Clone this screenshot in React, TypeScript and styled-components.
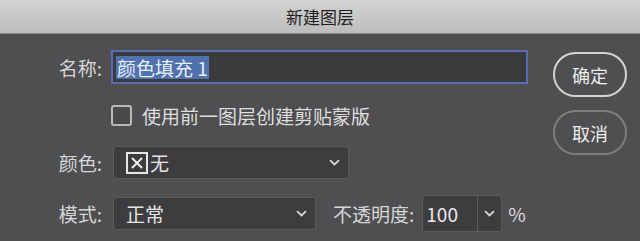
import styled, { createGlobalStyle } from 'styled-components';

const GlobalStyle = createGlobalStyle`
  html, body {
    margin: 0;
    padding: 0;
    background: #4f4f51;
  }
  body {
    font-family: "Noto Sans CJK SC", "Noto Sans", sans-serif;
  }
`;

const Dialog = styled.div`
  width: 640px;
  height: 241px;
  display: flex;
  flex-direction: column;
  background: #4f4f51;
  overflow: hidden;
`;

const TitleBar = styled.div`
  height: 33px;
  flex-shrink: 0;
  display: flex;
  align-items: center;
  justify-content: center;
  background: linear-gradient(#d2d2d2, #bdbdbd);
  border-bottom: 1px solid #8a8a8a;
  color: #1e1e1e;
  font-size: 17px;
  line-height: 1;
`;

const Body = styled.div`
  flex: 1;
  display: flex;
  padding: 16px 0 0 0;
`;

const Form = styled.div`
  display: flex;
  flex-direction: column;
  width: 540px;
`;

const Row = styled.div<{ $top?: number }>`
  display: flex;
  align-items: center;
  margin-top: ${(p) => p.$top ?? 0}px;
`;

const Label = styled.label`
  width: 108px;
  padding-right: 6px;
  box-sizing: border-box;
  text-align: right;
  color: #d6d6d6;
  font-size: 19px;
  line-height: 1;
  flex-shrink: 0;
`;

const NameInput = styled.div`
  width: 407px;
  height: 30px;
  display: flex;
  align-items: center;
  margin-left: 3px;
  padding: 0 3px;
  background: #3b3b3d;
  border: 2px solid #5a6db0;
  box-sizing: content-box;
`;

const Selected = styled.span`
  background: #4f72ad;
  color: #e8eefa;
  font-size: 19px;
  line-height: 23px;
  padding: 0 1px;
`;

const CheckRow = styled.div`
  display: flex;
  align-items: center;
  margin-left: 111px;
  margin-top: 21px;
  gap: 10px;
  color: #dedede;
  font-size: 19px;
  line-height: 1;
`;

const CheckBox = styled.span`
  width: 17px;
  height: 17px;
  border: 2px solid #b9b9b9;
  border-radius: 3px;
  background: #4a4a4c;
`;

const Select = styled.div<{ $w: number }>`
  width: ${(p) => p.$w}px;
  height: 33px;
  display: flex;
  align-items: center;
  padding: 0 8px 0 12px;
  box-sizing: border-box;
  margin-left: 5px;
  background: #3d3d3f;
  border: 1px solid #5c5c5e;
  border-radius: 3px;
  color: #e4e4e4;
  font-size: 19px;
  line-height: 1;
`;

const SelectText = styled.span`
  flex: 1;
  display: flex;
  align-items: center;
`;

const NoneBox = styled.span`
  width: 18px;
  height: 18px;
  border: 2px solid #e6e6e6;
  display: flex;
  align-items: center;
  justify-content: center;
  margin-right: 2px;
`;

const Chevron = () => (
  <svg width="11" height="7" viewBox="0 0 11 7">
    <path d="M1 1.2 L5.5 5.5 L10 1.2" fill="none" stroke="#d8d8d8" strokeWidth="1.8" />
  </svg>
);

const OpacityLabel = styled.span`
  margin-left: 17px;
  color: #d6d6d6;
  font-size: 19px;
  line-height: 1;
`;

const OpacityField = styled.div`
  display: flex;
  height: 35px;
  margin-left: 8px;
  background: #3d3d3f;
  border: 1px solid #5c5c5e;
  border-radius: 3px;
`;

const OpacityValue = styled.span`
  width: 55px;
  display: flex;
  align-items: center;
  padding-left: 3px;
  box-sizing: border-box;
  color: #e8e8e8;
  font-size: 19px;
  border-right: 1px solid #5c5c5e;
`;

const OpacityDrop = styled.span`
  width: 23px;
  display: flex;
  align-items: center;
  justify-content: center;
`;

const Percent = styled.span`
  margin-left: 6px;
  color: #dedede;
  font-size: 19px;
`;

const Buttons = styled.div`
  display: flex;
  flex-direction: column;
  gap: 13px;
  padding-top: 2px;
  margin-left: 13px;
`;

const Button = styled.button<{ $primary?: boolean }>`
  width: 74px;
  height: 45px;
  border-radius: 23px;
  background: transparent;
  border: 2px solid ${(p) => (p.$primary ? '#d4d4d4' : '#7e7e80')};
  color: #ececec;
  font-family: inherit;
  font-size: 18px;
  line-height: 1;
  padding: 0;
`;

export default function App() {
  return (
    <Dialog>
      <GlobalStyle />
      <TitleBar>新建图层</TitleBar>
      <Body>
        <Form>
          <Row>
            <Label>名称:</Label>
            <NameInput>
              <Selected>颜色填充 1</Selected>
            </NameInput>
          </Row>
          <CheckRow>
            <CheckBox />
            <span>使用前一图层创建剪贴蒙版</span>
          </CheckRow>
          <Row $top={20}>
            <Label>颜色:</Label>
            <Select $w={236}>
              <SelectText>
                <NoneBox>
                  <svg width="12" height="12" viewBox="0 0 12 12">
                    <path d="M1 1 L11 11 M11 1 L1 11" stroke="#ececec" strokeWidth="2" />
                  </svg>
                </NoneBox>
                无
              </SelectText>
              <Chevron />
            </Select>
          </Row>
          <Row $top={16}>
            <Label>模式:</Label>
            <Select $w={203}>
              <SelectText>正常</SelectText>
              <Chevron />
            </Select>
            <OpacityLabel>不透明度:</OpacityLabel>
            <OpacityField>
              <OpacityValue>100</OpacityValue>
              <OpacityDrop>
                <Chevron />
              </OpacityDrop>
            </OpacityField>
            <Percent>%</Percent>
          </Row>
        </Form>
        <Buttons>
          <Button $primary>确定</Button>
          <Button>取消</Button>
        </Buttons>
      </Body>
    </Dialog>
  );
}
